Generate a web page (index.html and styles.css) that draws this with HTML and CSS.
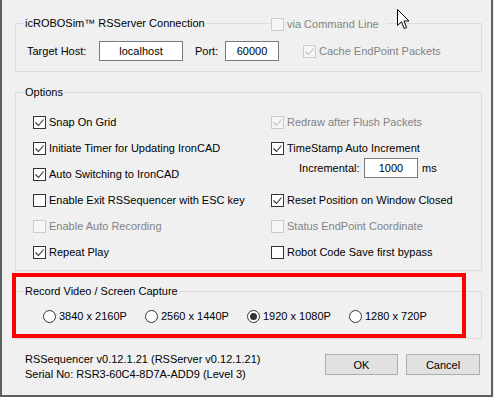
FILE: index.html
```html
<!DOCTYPE html>
<html lang="en">
<head>
    <meta charset="UTF-8">
    <title>RSSequencer Options</title>
    <link rel="stylesheet" href="styles.css">
</head>
<body>
<div class="window">

    <fieldset class="group group-conn">
        <legend>icROBOSim™ RSServer Connection</legend>
        <div class="conn-row">
            <span class="conn-label">Target Host:</span>
            <input class="field field-host" type="text" value="localhost">
            <span class="conn-port">Port:</span>
            <input class="field field-port" type="text" value="60000">
            <label class="check is-disabled conn-cache">
                <span class="box"><svg viewBox="0 0 11 11"><path d="M1.5 5.5l3 3 5-6"/></svg></span>Cache EndPoint Packets
            </label>
        </div>
    </fieldset>

    <label class="check is-disabled via-cmd">
        <span class="box"></span>via Command Line
    </label>

    <fieldset class="group group-opts">
        <legend>Options</legend>
        <div class="cols">
            <div class="col col-left">
                <label class="check row"><span class="box"><svg viewBox="0 0 11 11"><path d="M1.5 5.5l3 3 5-6"/></svg></span>Snap On Grid</label>
                <label class="check row"><span class="box"><svg viewBox="0 0 11 11"><path d="M1.5 5.5l3 3 5-6"/></svg></span>Initiate Timer for Updating IronCAD</label>
                <label class="check row"><span class="box"><svg viewBox="0 0 11 11"><path d="M1.5 5.5l3 3 5-6"/></svg></span>Auto Switching to IronCAD</label>
                <label class="check row"><span class="box"></span>Enable Exit RSSequencer with ESC key</label>
                <label class="check row is-disabled"><span class="box"></span>Enable Auto Recording</label>
                <label class="check row"><span class="box"><svg viewBox="0 0 11 11"><path d="M1.5 5.5l3 3 5-6"/></svg></span>Repeat Play</label>
            </div>
            <div class="col col-right">
                <label class="check row is-disabled"><span class="box"><svg viewBox="0 0 11 11"><path d="M1.5 5.5l3 3 5-6"/></svg></span>Redraw after Flush Packets</label>
                <div class="stamp">
                    <label class="check row"><span class="box"><svg viewBox="0 0 11 11"><path d="M1.5 5.5l3 3 5-6"/></svg></span>TimeStamp Auto Increment</label>
                    <div class="incr">
                        <span class="incr-label">Incremental:</span>
                        <input class="field field-incr" type="text" value="1000">
                        <span class="incr-unit">ms</span>
                    </div>
                </div>
                <label class="check row"><span class="box"><svg viewBox="0 0 11 11"><path d="M1.5 5.5l3 3 5-6"/></svg></span>Reset Position on Window Closed</label>
                <label class="check row is-disabled"><span class="box"></span>Status EndPoint Coordinate</label>
                <label class="check row"><span class="box"></span>Robot Code Save first bypass</label>
            </div>
        </div>
    </fieldset>

    <fieldset class="group group-rec">
        <legend>Record Video / Screen Capture</legend>
        <div class="radios">
            <label class="radio"><span class="dot"></span>3840 x 2160P</label>
            <label class="radio"><span class="dot"></span>2560 x 1440P</label>
            <label class="radio is-on"><span class="dot"></span>1920 x 1080P</label>
            <label class="radio"><span class="dot"></span>1280 x 720P</label>
        </div>
    </fieldset>

    <div class="footer">
        <div class="info">
            <p>RSSequencer v0.12.1.21 (RSServer v0.12.1.21)</p>
            <p>Serial No: RSR3-60C4-8D7A-ADD9 (Level 3)</p>
        </div>
        <div class="buttons">
            <button type="button" class="btn btn-ok">OK</button>
            <button type="button" class="btn btn-cancel">Cancel</button>
        </div>
    </div>

    <div class="mark"></div>

    <svg class="cursor" width="13" height="21" viewBox="0 0 13 21">
        <path d="M0.5 0.5V16.5L4.5 12.8L7.2 19.5L9.6 18.5L7 12H12Z" fill="#fff" stroke="#000" stroke-linejoin="miter"/>
    </svg>

</div>
</body>
</html>
```

FILE: styles.css
```css
*,
*::before,
*::after {
    box-sizing: border-box;
}

body {
    margin: 0;
    background-color: #f0f0f0;
    font-family: "Liberation Sans", Arial, sans-serif;
    font-size: 11px;
    color: #000;
}

p {
    margin: 0;
}

.window {
    position: relative;
    width: 493px;
    height: 397px;
    border: 2px solid #5f5f5f;
    border-top: 0;
    padding: 15px 9px 0 13px;
}

.group {
    margin: 0;
    padding: 9px 8px 5px;
    border: 1px solid #dcdcdc;
    min-width: 0;
}

.group legend {
    padding: 0 1px;
    line-height: 16px;
}

.group-conn {
    padding: 10px 8px 10px;
}

.group-opts,
.group-rec {
    margin-top: 12px;
}

.group-rec {
    padding-bottom: 14px;
}

/* connection row */
.conn-row {
    display: flex;
    align-items: center;
    height: 20px;
}

.conn-label {
    width: 75px;
    padding-left: 3px;
}

.field {
    height: 20px;
    border: 1px solid #7a7a7a;
    background-color: #fff;
    font: inherit;
    color: #000;
    text-align: center;
    padding: 0;
    margin: 0;
}

.field-host {
    width: 84px;
}

.conn-port {
    width: 42px;
    padding-left: 12px;
}

.field-port {
    width: 54px;
}

.conn-cache {
    margin-left: 24px;
}

/* checkbox */
.check {
    display: flex;
    align-items: center;
    gap: 3px;
    line-height: 15px;
    white-space: nowrap;
}

.check .box {
    display: inline-flex;
    width: 13px;
    height: 13px;
    flex: none;
    border: 1px solid #333;
    background-color: #fff;
}

.check .box svg {
    width: 11px;
    height: 11px;
    fill: none;
    stroke: #333;
    stroke-width: 1.1;
}

.check.is-disabled {
    color: #838383;
}

.check.is-disabled .box {
    border-color: #cccccc;
    background-color: #f6f6f6;
}

.check.is-disabled .box svg {
    stroke: #c2c2c2;
}

.via-cmd {
    position: absolute;
    left: 268px;
    top: 17px;
    padding: 0 7px 0 1px;
    background-color: #f0f0f0;
}

/* options */
.cols {
    display: flex;
    padding-left: 9px;
}

.col-left {
    width: 238px;
}

.row {
    height: 26px;
}

.stamp {
    height: 52px;
}

.incr {
    display: flex;
    align-items: center;
    height: 20px;
    margin-top: -3px;
    padding-left: 28px;
}

.incr-label {
    width: 65px;
}

.field-incr {
    width: 54px;
}

.incr-unit {
    margin-left: 4px;
}

/* radios */
.radios {
    display: flex;
    padding-left: 19px;
}

.radio {
    display: flex;
    align-items: center;
    gap: 3px;
    width: 102px;
    height: 16px;
    white-space: nowrap;
}

.radio .dot {
    position: relative;
    width: 13px;
    height: 13px;
    flex: none;
    border: 1px solid #333;
    border-radius: 50%;
    background-color: #fff;
}

.radio.is-on .dot::after {
    content: "";
    position: absolute;
    left: 2px;
    top: 2px;
    width: 7px;
    height: 7px;
    border-radius: 50%;
    background-color: #333;
}

/* footer */
.footer {
    display: flex;
    justify-content: space-between;
    margin-top: 13px;
    padding-left: 10px;
}

.info {
    line-height: 15px;
}

.buttons {
    display: flex;
    gap: 8px;
    margin-top: 2px;
    margin-right: 2px;
}

.btn {
    width: 73px;
    height: 21px;
    padding: 0;
    border: 1px solid #adadad;
    background-color: #e1e1e1;
    font: inherit;
    color: #000;
}

.btn-cancel {
    width: 74px;
}

/* red annotation frame */
.mark {
    position: absolute;
    left: 10px;
    top: 273px;
    width: 454px;
    height: 65px;
    border: 4px solid #ff0000;
    pointer-events: none;
}

.cursor {
    position: absolute;
    left: 395px;
    top: 9px;
}
```
